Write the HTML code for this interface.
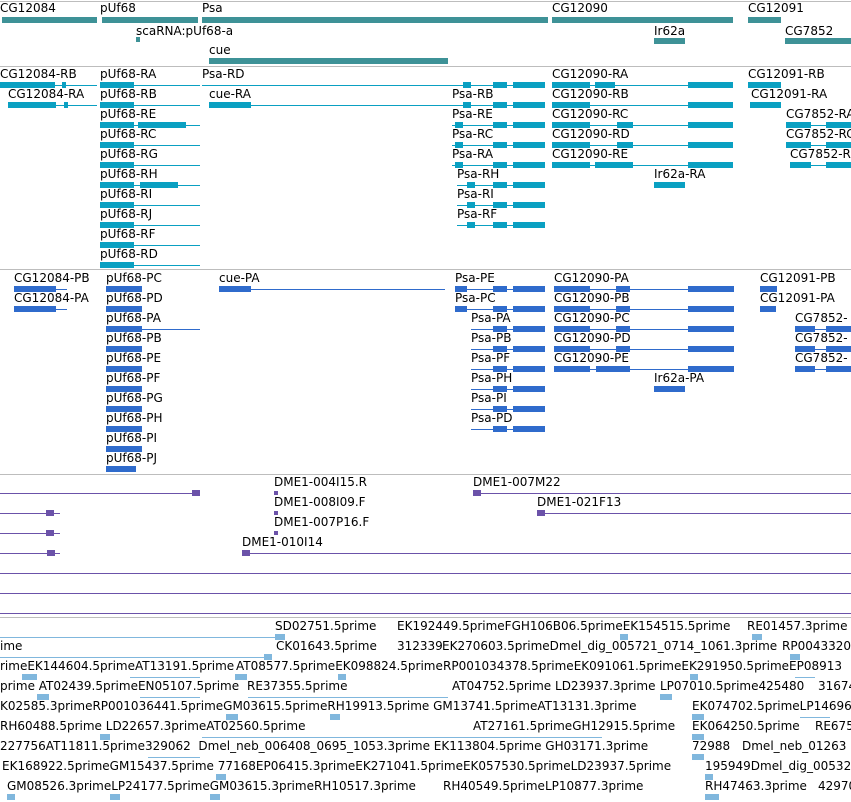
<!DOCTYPE html>
<html><head><meta charset="utf-8"><style>
body{margin:0;width:851px;height:802px;background:#fff;position:relative;overflow:hidden;font-family:"DejaVu Sans","Liberation Sans",sans-serif;font-size:12px}
div{position:absolute}
.t{white-space:pre;line-height:14px;color:#000}
.sep{left:0;width:851px;height:1px;background:#bdbdbd}
.g{height:6px;background:#3e9297}
.a{background:#0aa0c2}
.p{background:#2f6bcc}
.m{background:#6b52a9}
.e{background:#80b7dd}
.l{height:1px}
.b{height:6px}
</style></head><body>
<div class="sep" style="top:1px"></div>
<div class="sep" style="top:66px"></div>
<div class="sep" style="top:269px"></div>
<div class="sep" style="top:474px"></div>
<div class="sep" style="top:617px"></div>

<!-- genes -->
<div class="t" style="left:0;top:1px">CG12084</div><div class="g" style="left:2px;top:17px;width:95px"></div>
<div class="t" style="left:100px;top:1px">pUf68</div><div class="g" style="left:102px;top:17px;width:96px"></div>
<div class="t" style="left:202px;top:1px">Psa</div><div class="g" style="left:202px;top:17px;width:346px"></div>
<div class="t" style="left:136px;top:24px">scaRNA:pUf68-a</div><div class="g" style="left:136px;top:37px;width:4px;height:5px"></div>
<div class="t" style="left:209px;top:43px">cue</div><div class="g" style="left:209px;top:58px;width:239px"></div>
<div class="t" style="left:552px;top:1px">CG12090</div><div class="g" style="left:552px;top:17px;width:181px"></div>
<div class="t" style="left:654px;top:24px">Ir62a</div><div class="g" style="left:654px;top:38px;width:31px"></div>
<div class="t" style="left:748px;top:1px">CG12091</div><div class="g" style="left:748px;top:17px;width:33px"></div>
<div class="t" style="left:785px;top:24px">CG7852</div><div class="g" style="left:785px;top:38px;width:66px"></div>

<!-- transcripts -->
<div class="t" style="left:0;top:67px">CG12084-RB</div><div class="a l" style="left:0;top:85px;width:97px"></div><div class="a b" style="left:0;top:82px;width:55px"></div><div class="a b" style="left:62px;top:82px;width:4px"></div>
<div class="t" style="left:8px;top:87px">CG12084-RA</div><div class="a l" style="left:8px;top:105px;width:89px"></div><div class="a b" style="left:8px;top:102px;width:48px"></div><div class="a b" style="left:64px;top:102px;width:4px"></div>
<div class="t" style="left:100px;top:67px">pUf68-RA</div>
<div class="t" style="left:100px;top:87px">pUf68-RB</div>
<div class="t" style="left:100px;top:107px">pUf68-RE</div>
<div class="t" style="left:100px;top:127px">pUf68-RC</div>
<div class="t" style="left:100px;top:147px">pUf68-RG</div>
<div class="t" style="left:100px;top:167px">pUf68-RH</div>
<div class="t" style="left:100px;top:187px">pUf68-RI</div>
<div class="t" style="left:100px;top:207px">pUf68-RJ</div>
<div class="t" style="left:100px;top:227px">pUf68-RF</div>
<div class="t" style="left:100px;top:247px">pUf68-RD</div>
<div class="a l" style="left:100px;top:85px;width:100px"></div><div class="a b" style="left:100px;top:82px;width:34px"></div>
<div class="a l" style="left:100px;top:105px;width:100px"></div><div class="a b" style="left:100px;top:102px;width:34px"></div>
<div class="a l" style="left:100px;top:125px;width:100px"></div><div class="a b" style="left:100px;top:122px;width:34px"></div><div class="a b" style="left:138px;top:122px;width:48px"></div>
<div class="a l" style="left:100px;top:145px;width:100px"></div><div class="a b" style="left:100px;top:142px;width:34px"></div>
<div class="a l" style="left:100px;top:165px;width:100px"></div><div class="a b" style="left:100px;top:162px;width:34px"></div>
<div class="a l" style="left:100px;top:185px;width:100px"></div><div class="a b" style="left:100px;top:182px;width:34px"></div><div class="a b" style="left:140px;top:182px;width:38px"></div>
<div class="a l" style="left:100px;top:205px;width:100px"></div><div class="a b" style="left:100px;top:202px;width:34px"></div>
<div class="a l" style="left:100px;top:225px;width:100px"></div><div class="a b" style="left:100px;top:222px;width:34px"></div>
<div class="a l" style="left:100px;top:245px;width:100px"></div><div class="a b" style="left:100px;top:242px;width:34px"></div>
<div class="a l" style="left:100px;top:265px;width:100px"></div><div class="a b" style="left:100px;top:262px;width:34px"></div>

<div class="t" style="left:202px;top:67px">Psa-RD</div><div class="a l" style="left:202px;top:85px;width:343px"></div>
<div class="t" style="left:209px;top:87px">cue-RA</div><div class="a l" style="left:209px;top:105px;width:241px"></div><div class="a b" style="left:209px;top:102px;width:42px"></div>
<div class="t" style="left:452px;top:87px">Psa-RB</div><div class="a l" style="left:446px;top:105px;width:99px"></div>
<div class="t" style="left:452px;top:107px">Psa-RE</div><div class="a l" style="left:452px;top:125px;width:93px"></div>
<div class="t" style="left:452px;top:127px">Psa-RC</div><div class="a l" style="left:452px;top:145px;width:93px"></div>
<div class="t" style="left:452px;top:147px">Psa-RA</div><div class="a l" style="left:452px;top:165px;width:93px"></div>
<div class="t" style="left:457px;top:167px">Psa-RH</div><div class="a l" style="left:457px;top:185px;width:88px"></div>
<div class="t" style="left:457px;top:187px">Psa-RI</div><div class="a l" style="left:457px;top:205px;width:88px"></div>
<div class="t" style="left:457px;top:207px">Psa-RF</div><div class="a l" style="left:457px;top:225px;width:88px"></div>
<div class="a b" style="left:463px;top:82px;width:8px"></div><div class="a b" style="left:493px;top:82px;width:14px"></div><div class="a b" style="left:513px;top:82px;width:32px"></div>
<div class="a b" style="left:463px;top:102px;width:8px"></div><div class="a b" style="left:493px;top:102px;width:14px"></div><div class="a b" style="left:513px;top:102px;width:32px"></div>
<div class="a b" style="left:455px;top:122px;width:8px"></div><div class="a b" style="left:493px;top:122px;width:14px"></div><div class="a b" style="left:513px;top:122px;width:32px"></div>
<div class="a b" style="left:455px;top:142px;width:8px"></div><div class="a b" style="left:493px;top:142px;width:14px"></div><div class="a b" style="left:513px;top:142px;width:32px"></div>
<div class="a b" style="left:455px;top:162px;width:8px"></div><div class="a b" style="left:493px;top:162px;width:14px"></div><div class="a b" style="left:513px;top:162px;width:32px"></div>
<div class="a b" style="left:467px;top:182px;width:8px"></div><div class="a b" style="left:493px;top:182px;width:14px"></div><div class="a b" style="left:513px;top:182px;width:32px"></div>
<div class="a b" style="left:467px;top:202px;width:8px"></div><div class="a b" style="left:493px;top:202px;width:14px"></div><div class="a b" style="left:513px;top:202px;width:32px"></div>
<div class="a b" style="left:467px;top:222px;width:8px"></div><div class="a b" style="left:493px;top:222px;width:14px"></div><div class="a b" style="left:513px;top:222px;width:32px"></div>

<div class="t" style="left:552px;top:67px">CG12090-RA</div>
<div class="t" style="left:552px;top:87px">CG12090-RB</div>
<div class="t" style="left:552px;top:107px">CG12090-RC</div>
<div class="t" style="left:552px;top:127px">CG12090-RD</div>
<div class="t" style="left:552px;top:147px">CG12090-RE</div>
<div class="a l" style="left:552px;top:85px;width:181px"></div><div class="a b" style="left:552px;top:82px;width:38px"></div><div class="a b" style="left:595px;top:82px;width:20px"></div><div class="a b" style="left:688px;top:82px;width:45px"></div>
<div class="a l" style="left:552px;top:105px;width:181px"></div><div class="a b" style="left:552px;top:102px;width:38px"></div><div class="a b" style="left:688px;top:102px;width:45px"></div>
<div class="a l" style="left:552px;top:125px;width:181px"></div><div class="a b" style="left:552px;top:122px;width:38px"></div><div class="a b" style="left:617px;top:122px;width:16px"></div><div class="a b" style="left:688px;top:122px;width:45px"></div>
<div class="a l" style="left:552px;top:145px;width:181px"></div><div class="a b" style="left:552px;top:142px;width:38px"></div><div class="a b" style="left:617px;top:142px;width:16px"></div><div class="a b" style="left:688px;top:142px;width:45px"></div>
<div class="a l" style="left:552px;top:165px;width:181px"></div><div class="a b" style="left:552px;top:162px;width:38px"></div><div class="a b" style="left:595px;top:162px;width:38px"></div><div class="a b" style="left:688px;top:162px;width:45px"></div>
<div class="t" style="left:654px;top:167px">Ir62a-RA</div><div class="a b" style="left:654px;top:182px;width:31px"></div>
<div class="t" style="left:748px;top:67px">CG12091-RB</div><div class="a b" style="left:748px;top:82px;width:33px"></div>
<div class="t" style="left:751px;top:87px">CG12091-RA</div><div class="a b" style="left:750px;top:102px;width:31px"></div>
<div class="t" style="left:786px;top:107px">CG7852-RA</div><div class="a l" style="left:786px;top:125px;width:65px"></div><div class="a b" style="left:786px;top:122px;width:25px"></div><div class="a b" style="left:826px;top:122px;width:25px"></div>
<div class="t" style="left:786px;top:127px">CG7852-RC</div><div class="a l" style="left:786px;top:145px;width:65px"></div><div class="a b" style="left:786px;top:142px;width:25px"></div><div class="a b" style="left:826px;top:142px;width:25px"></div>
<div class="t" style="left:790px;top:147px">CG7852-RB</div><div class="a l" style="left:790px;top:165px;width:61px"></div><div class="a b" style="left:790px;top:162px;width:21px"></div><div class="a b" style="left:826px;top:162px;width:25px"></div>

<!-- proteins -->
<div class="t" style="left:14px;top:271px">CG12084-PB</div><div class="p l" style="left:14px;top:289px;width:53px"></div><div class="p b" style="left:14px;top:286px;width:42px"></div>
<div class="t" style="left:14px;top:291px">CG12084-PA</div><div class="p l" style="left:14px;top:309px;width:53px"></div><div class="p b" style="left:14px;top:306px;width:42px"></div>
<div class="t" style="left:106px;top:271px">pUf68-PC</div><div class="p b" style="left:106px;top:286px;width:36px"></div>
<div class="t" style="left:106px;top:291px">pUf68-PD</div><div class="p b" style="left:106px;top:306px;width:36px"></div>
<div class="t" style="left:106px;top:311px">pUf68-PA</div><div class="p l" style="left:106px;top:329px;width:94px"></div><div class="p b" style="left:106px;top:326px;width:36px"></div>
<div class="t" style="left:106px;top:331px">pUf68-PB</div><div class="p b" style="left:106px;top:346px;width:36px"></div>
<div class="t" style="left:106px;top:351px">pUf68-PE</div><div class="p b" style="left:106px;top:366px;width:36px"></div>
<div class="t" style="left:106px;top:371px">pUf68-PF</div><div class="p b" style="left:106px;top:386px;width:36px"></div>
<div class="t" style="left:106px;top:391px">pUf68-PG</div><div class="p b" style="left:106px;top:406px;width:36px"></div>
<div class="t" style="left:106px;top:411px">pUf68-PH</div><div class="p b" style="left:106px;top:426px;width:36px"></div>
<div class="t" style="left:106px;top:431px">pUf68-PI</div><div class="p b" style="left:106px;top:446px;width:36px"></div>
<div class="t" style="left:106px;top:451px">pUf68-PJ</div><div class="p b" style="left:106px;top:466px;width:30px"></div>
<div class="t" style="left:219px;top:271px">cue-PA</div><div class="p l" style="left:219px;top:289px;width:226px"></div><div class="p b" style="left:219px;top:286px;width:32px"></div>
<div class="t" style="left:455px;top:271px">Psa-PE</div><div class="t" style="left:455px;top:291px">Psa-PC</div>
<div class="t" style="left:471px;top:311px">Psa-PA</div><div class="t" style="left:471px;top:331px">Psa-PB</div><div class="t" style="left:471px;top:351px">Psa-PF</div><div class="t" style="left:471px;top:371px">Psa-PH</div><div class="t" style="left:471px;top:391px">Psa-PI</div><div class="t" style="left:471px;top:411px">Psa-PD</div>
<div class="p l" style="left:455px;top:289px;width:90px"></div><div class="p b" style="left:455px;top:286px;width:12px"></div><div class="p b" style="left:493px;top:286px;width:14px"></div><div class="p b" style="left:513px;top:286px;width:32px"></div>
<div class="p l" style="left:455px;top:309px;width:90px"></div><div class="p b" style="left:455px;top:306px;width:12px"></div><div class="p b" style="left:493px;top:306px;width:14px"></div><div class="p b" style="left:513px;top:306px;width:32px"></div>
<div class="p l" style="left:471px;top:329px;width:74px"></div><div class="p b" style="left:493px;top:326px;width:14px"></div><div class="p b" style="left:513px;top:326px;width:32px"></div>
<div class="p l" style="left:471px;top:349px;width:74px"></div><div class="p b" style="left:493px;top:346px;width:14px"></div><div class="p b" style="left:513px;top:346px;width:32px"></div>
<div class="p l" style="left:471px;top:369px;width:74px"></div><div class="p b" style="left:493px;top:366px;width:14px"></div><div class="p b" style="left:513px;top:366px;width:32px"></div>
<div class="p l" style="left:471px;top:389px;width:74px"></div><div class="p b" style="left:493px;top:386px;width:14px"></div><div class="p b" style="left:513px;top:386px;width:32px"></div>
<div class="p l" style="left:471px;top:409px;width:74px"></div><div class="p b" style="left:493px;top:406px;width:14px"></div><div class="p b" style="left:513px;top:406px;width:32px"></div>
<div class="p l" style="left:471px;top:429px;width:74px"></div><div class="p b" style="left:493px;top:426px;width:14px"></div><div class="p b" style="left:513px;top:426px;width:32px"></div>
<div class="t" style="left:554px;top:271px">CG12090-PA</div><div class="t" style="left:554px;top:291px">CG12090-PB</div><div class="t" style="left:554px;top:311px">CG12090-PC</div><div class="t" style="left:554px;top:331px">CG12090-PD</div><div class="t" style="left:554px;top:351px">CG12090-PE</div>
<div class="p l" style="left:554px;top:289px;width:180px"></div><div class="p b" style="left:554px;top:286px;width:36px"></div><div class="p b" style="left:616px;top:286px;width:14px"></div><div class="p b" style="left:688px;top:286px;width:46px"></div>
<div class="p l" style="left:554px;top:309px;width:180px"></div><div class="p b" style="left:554px;top:306px;width:36px"></div><div class="p b" style="left:616px;top:306px;width:14px"></div><div class="p b" style="left:688px;top:306px;width:46px"></div>
<div class="p l" style="left:554px;top:329px;width:180px"></div><div class="p b" style="left:554px;top:326px;width:36px"></div><div class="p b" style="left:616px;top:326px;width:14px"></div><div class="p b" style="left:688px;top:326px;width:46px"></div>
<div class="p l" style="left:554px;top:349px;width:180px"></div><div class="p b" style="left:554px;top:346px;width:36px"></div><div class="p b" style="left:616px;top:346px;width:14px"></div><div class="p b" style="left:688px;top:346px;width:46px"></div>
<div class="p l" style="left:554px;top:369px;width:180px"></div><div class="p b" style="left:554px;top:366px;width:36px"></div><div class="p b" style="left:596px;top:366px;width:34px"></div><div class="p b" style="left:688px;top:366px;width:46px"></div>
<div class="t" style="left:654px;top:371px">Ir62a-PA</div><div class="p b" style="left:654px;top:386px;width:31px"></div>
<div class="t" style="left:760px;top:271px">CG12091-PB</div><div class="p b" style="left:760px;top:286px;width:17px"></div>
<div class="t" style="left:760px;top:291px">CG12091-PA</div><div class="p b" style="left:760px;top:306px;width:16px"></div>
<div class="t" style="left:795px;top:311px">CG7852-</div><div class="p l" style="left:795px;top:329px;width:56px"></div><div class="p b" style="left:795px;top:326px;width:20px"></div><div class="p b" style="left:826px;top:326px;width:25px"></div>
<div class="t" style="left:795px;top:331px">CG7852-</div><div class="p l" style="left:795px;top:349px;width:56px"></div><div class="p b" style="left:795px;top:346px;width:20px"></div><div class="p b" style="left:826px;top:346px;width:25px"></div>
<div class="t" style="left:795px;top:351px">CG7852-</div><div class="p l" style="left:795px;top:369px;width:56px"></div><div class="p b" style="left:795px;top:366px;width:20px"></div><div class="p b" style="left:826px;top:366px;width:25px"></div>

<!-- DME -->
<div class="m l" style="left:0;top:493px;width:198px"></div><div class="m b" style="left:192px;top:490px;width:8px"></div>
<div class="t" style="left:274px;top:475px">DME1-004I15.R</div><div class="m b" style="left:274px;top:491px;width:4px;height:4px"></div>
<div class="t" style="left:473px;top:475px">DME1-007M22</div><div class="m l" style="left:473px;top:493px;width:378px"></div><div class="m b" style="left:473px;top:490px;width:8px"></div>
<div class="m l" style="left:0;top:513px;width:60px"></div><div class="m b" style="left:46px;top:510px;width:8px"></div>
<div class="t" style="left:274px;top:495px">DME1-008I09.F</div><div class="m b" style="left:274px;top:511px;width:4px;height:4px"></div>
<div class="t" style="left:537px;top:495px">DME1-021F13</div><div class="m l" style="left:537px;top:513px;width:314px"></div><div class="m b" style="left:537px;top:510px;width:8px"></div>
<div class="m l" style="left:0;top:533px;width:60px"></div><div class="m b" style="left:46px;top:530px;width:8px"></div>
<div class="t" style="left:274px;top:515px">DME1-007P16.F</div><div class="m b" style="left:274px;top:531px;width:4px;height:4px"></div>
<div class="m l" style="left:0;top:553px;width:60px"></div><div class="m b" style="left:47px;top:550px;width:8px"></div>
<div class="t" style="left:242px;top:535px">DME1-010I14</div><div class="m l" style="left:242px;top:553px;width:609px"></div><div class="m b" style="left:242px;top:550px;width:8px"></div>
<div class="m l" style="left:0;top:573px;width:851px"></div>
<div class="m l" style="left:0;top:593px;width:851px"></div>
<div class="m l" style="left:0;top:613px;width:851px"></div>

<!-- ESTs -->
<div class="t" style="left:275px;top:619px">SD02751.5prime</div>
<div class="t" style="left:397px;top:619px">EK192449.5primeFGH106B06.5primeEK154515.5prime</div>
<div class="t" style="left:747px;top:619px">RE01457.3prime</div>
<div class="e l" style="left:0;top:637px;width:280px"></div><div class="e b" style="left:275px;top:634px;width:10px"></div><div class="e b" style="left:620px;top:634px;width:8px"></div><div class="e b" style="left:752px;top:634px;width:10px"></div>
<div class="t" style="left:0;top:639px">ime</div>
<div class="t" style="left:276px;top:639px">CK01643.5prime</div>
<div class="t" style="left:397px;top:639px">312339</div>
<div class="t" style="left:442px;top:639px">EK270603.5primeDmel_dig_005721_0714_1061.3prime</div>
<div class="t" style="left:782px;top:639px">RP0043320</div>
<div class="e l" style="left:0;top:657px;width:270px"></div><div class="e b" style="left:264px;top:654px;width:8px"></div><div class="e b" style="left:790px;top:654px;width:10px"></div>
<div class="t" style="left:0;top:659px">rimeEK144604.5primeAT13191.5prime</div>
<div class="t" style="left:236px;top:659px">AT08577.5primeEK098824.5prime</div>
<div class="t" style="left:443px;top:659px">RP001034378.5primeEK091061.5primeEK291950.5primeEP08913</div>
<div class="e l" style="left:130px;top:677px;width:70px"></div><div class="e b" style="left:22px;top:674px;width:15px"></div><div class="e b" style="left:235px;top:674px;width:12px"></div><div class="e b" style="left:338px;top:674px;width:8px"></div><div class="e b" style="left:690px;top:674px;width:8px"></div><div class="e l" style="left:795px;top:677px;width:20px"></div>
<div class="t" style="left:0;top:679px">prime AT02439.5primeEN05107.5prime</div>
<div class="t" style="left:247px;top:679px">RE37355.5prime</div>
<div class="t" style="left:452px;top:679px">AT04752.5prime LD23937.3prime</div>
<div class="t" style="left:660px;top:679px">LP07010.5prime425480</div>
<div class="t" style="left:818px;top:679px">31674</div>
<div class="e l" style="left:140px;top:697px;width:60px"></div><div class="e l" style="left:248px;top:697px;width:200px"></div><div class="e b" style="left:37px;top:694px;width:12px"></div><div class="e b" style="left:660px;top:694px;width:12px"></div>
<div class="t" style="left:0;top:699px">K02585.3primeRP001036441.5primeGM03615.5primeRH19913.5prime GM13741.5primeAT13131.3prime</div>
<div class="t" style="left:692px;top:699px">EK074702.5primeLP14696</div>
<div class="e b" style="left:226px;top:714px;width:12px"></div><div class="e b" style="left:330px;top:714px;width:10px"></div><div class="e b" style="left:692px;top:714px;width:12px"></div><div class="e l" style="left:800px;top:717px;width:30px"></div>
<div class="t" style="left:0;top:719px">RH60488.5prime LD22657.3primeAT02560.5prime</div>
<div class="t" style="left:473px;top:719px">AT27161.5primeGH12915.5prime</div>
<div class="t" style="left:692px;top:719px">EK064250.5prime</div>
<div class="t" style="left:815px;top:719px">RE675</div>
<div class="e l" style="left:202px;top:737px;width:400px"></div><div class="e b" style="left:100px;top:734px;width:10px"></div><div class="e b" style="left:692px;top:734px;width:12px"></div>
<div class="t" style="left:0;top:739px">227756AT11811.5prime329062  Dmel_neb_006408_0695_1053.3prime EK113804.5prime GH03171.3prime</div>
<div class="t" style="left:692px;top:739px">72988</div>
<div class="t" style="left:742px;top:739px">Dmel_neb_01263</div>
<div class="e l" style="left:148px;top:757px;width:52px"></div><div class="e b" style="left:692px;top:754px;width:12px"></div>
<div class="t" style="left:2px;top:759px">EK168922.5primeGM15437.5prime 77168EP06415.3primeEK271041.5primeEK057530.5primeLD23937.5prime</div>
<div class="t" style="left:705px;top:759px">195949Dmel_dig_00532</div>
<div class="e b" style="left:216px;top:774px;width:10px"></div><div class="e b" style="left:705px;top:774px;width:8px"></div>
<div class="t" style="left:7px;top:779px">GM08526.3primeLP24177.5primeGM03615.3primeRH10517.3prime</div>
<div class="t" style="left:443px;top:779px">RH40549.5primeLP10877.3prime</div>
<div class="t" style="left:705px;top:779px">RH47463.3prime</div>
<div class="t" style="left:818px;top:779px">42970</div>
<div class="e b" style="left:7px;top:794px;width:8px"></div><div class="e b" style="left:110px;top:794px;width:10px"></div><div class="e b" style="left:210px;top:794px;width:10px"></div><div class="e b" style="left:705px;top:794px;width:14px"></div>
</body></html>
